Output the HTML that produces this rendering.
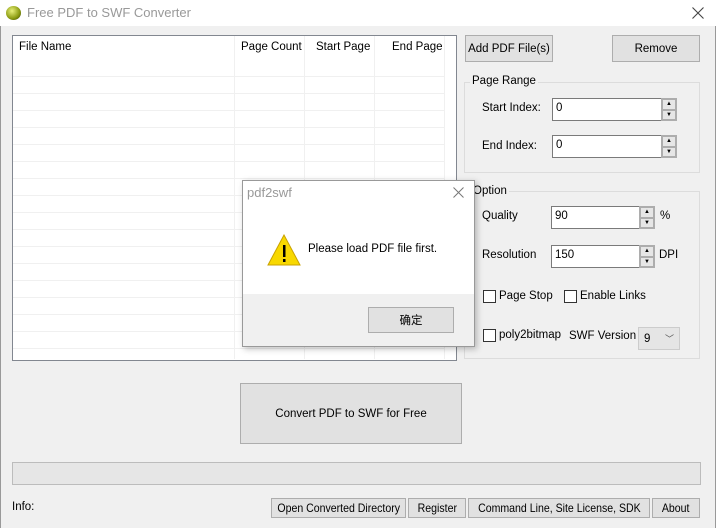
<!DOCTYPE html><html><head><style>
*{box-sizing:border-box;margin:0;padding:0}
body{width:716px;height:528px;position:relative;background:#f0f0f0;font-family:"Liberation Sans","Noto Sans CJK SC",sans-serif;font-size:11.5px;color:#000;overflow:hidden}
.a{position:absolute;white-space:nowrap}
.btn{position:absolute;background:#e1e1e1;border:1px solid #adadad;display:flex;align-items:center;justify-content:center;white-space:nowrap}
.sm span{display:inline-block;transform:scaleX(.88);font-size:12px}
.inp{position:absolute;background:#fff;border:1px solid #7a7a7a;padding:3px 3px}
.spin{position:absolute;width:16px;border:1px solid #adadad;background:#f0f0f0}
.spin div{height:50%;border:1px solid #adadad;background:#e6e6e6;font-size:6px;text-align:center;line-height:8px}
.grp{position:absolute;border:1px solid #dcdcdc}
.cb{position:absolute;width:13px;height:13px;border:1px solid #333;background:#fff}
.hl{position:absolute;left:13px;width:431px;height:1px;background:#f0f0f0}
.vl{position:absolute;top:36px;width:1px;height:323px;background:#f0f0f0}
</style></head><body>
<div class="a" style="left:0;top:0;width:716px;height:26px;background:#fff"></div>
<div class="a" style="left:6px;top:6px;width:15px;height:14px;border-radius:50%;background:radial-gradient(circle at 40% 35%,#e8f07a,#8a9a10 60%,#2e3a05)"></div>
<div class="a" style="left:27px;top:5px;font-size:13px;color:#999">Free PDF to SWF Converter</div>
<svg class="a" style="left:692px;top:7px" width="12" height="12"><path d="M0.5 0.5L11.5 11.5M11.5 0.5L0.5 11.5" stroke="#444" stroke-width="1.1"/></svg>
<div class="a" style="left:0;top:26px;width:1px;height:502px;background:#999"></div>
<div class="a" style="left:715px;top:26px;width:1px;height:502px;background:#999"></div>
<div class="a" style="left:12px;top:35px;width:445px;height:326px;background:#fff;border:1px solid #828790"></div>
<div class="a" style="left:19px;top:41px">File Name</div>
<div class="a" style="left:241px;top:41px">Page Count</div>
<div class="a" style="left:316px;top:41px">Start Page</div>
<div class="a" style="left:392px;top:41px">End Page</div>
<div class="vl" style="left:234px"></div><div class="vl" style="left:304px"></div><div class="vl" style="left:374px"></div><div class="vl" style="left:444px"></div>
<div class="hl" style="top:76px"></div><div class="hl" style="top:93px"></div><div class="hl" style="top:110px"></div><div class="hl" style="top:127px"></div><div class="hl" style="top:144px"></div><div class="hl" style="top:161px"></div><div class="hl" style="top:178px"></div><div class="hl" style="top:195px"></div><div class="hl" style="top:212px"></div><div class="hl" style="top:229px"></div><div class="hl" style="top:246px"></div><div class="hl" style="top:263px"></div><div class="hl" style="top:280px"></div><div class="hl" style="top:297px"></div><div class="hl" style="top:314px"></div><div class="hl" style="top:331px"></div><div class="hl" style="top:348px"></div>
<div class="btn" style="left:465px;top:35px;width:88px;height:27px">Add PDF File(s)</div>
<div class="btn" style="left:612px;top:35px;width:88px;height:27px">Remove</div>
<div class="grp" style="left:464px;top:82px;width:236px;height:91px"></div>
<div class="a" style="left:470px;top:75px;background:#f0f0f0;padding:0 2px">Page Range</div>
<div class="a" style="left:482px;top:102px">Start Index:</div>
<div class="inp" style="left:552px;top:98px;width:110px;height:23px">0</div>
<div class="spin" style="left:661px;top:98px;height:23px"><div>▲</div><div>▼</div></div>
<div class="a" style="left:482px;top:140px">End Index:</div>
<div class="inp" style="left:552px;top:135px;width:110px;height:23px">0</div>
<div class="spin" style="left:661px;top:135px;height:23px"><div>▲</div><div>▼</div></div>
<div class="grp" style="left:464px;top:191px;width:236px;height:168px"></div>
<div class="a" style="left:471px;top:185px;background:#f0f0f0;padding:0 2px">Option</div>
<div class="a" style="left:482px;top:210px">Quality</div>
<div class="inp" style="left:551px;top:206px;width:89px;height:23px">90</div>
<div class="spin" style="left:639px;top:206px;height:23px"><div>▲</div><div>▼</div></div>
<div class="a" style="left:660px;top:210px">%</div>
<div class="a" style="left:482px;top:249px">Resolution</div>
<div class="inp" style="left:551px;top:245px;width:89px;height:23px">150</div>
<div class="spin" style="left:639px;top:245px;height:23px"><div>▲</div><div>▼</div></div>
<div class="a" style="left:659px;top:249px">DPI</div>
<div class="cb" style="left:483px;top:290px"></div><div class="a" style="left:499px;top:290px">Page Stop</div>
<div class="cb" style="left:564px;top:290px"></div><div class="a" style="left:580px;top:290px">Enable Links</div>
<div class="cb" style="left:483px;top:329px"></div><div class="a" style="left:499px;top:329px">poly2bitmap</div>
<div class="a" style="left:569px;top:330px">SWF Version</div>
<div class="btn" style="left:638px;top:327px;width:42px;height:23px;justify-content:space-between;padding:0 5px;background:#e5e5e5;border-color:#ccc"><span>9</span><span style="font-size:9px;color:#555">﹀</span></div>
<div class="btn" style="left:240px;top:383px;width:222px;height:61px">Convert PDF to SWF for Free</div>
<div class="a" style="left:12px;top:462px;width:689px;height:23px;background:#e6e6e6;border:1px solid #bcbcbc"></div>
<div class="a" style="left:12px;top:501px">Info:</div>
<div class="btn sm" style="left:271px;top:498px;width:135px;height:20px"><span>Open Converted Directory</span></div>
<div class="btn sm" style="left:408px;top:498px;width:58px;height:20px"><span>Register</span></div>
<div class="btn sm" style="left:468px;top:498px;width:182px;height:20px"><span>Command Line, Site License, SDK</span></div>
<div class="btn sm" style="left:652px;top:498px;width:48px;height:20px"><span>About</span></div>
<div class="a" style="left:242px;top:180px;width:233px;height:167px;background:#fff;border:1px solid #999;box-shadow:2px 2px 6px rgba(0,0,0,.25)"></div>
<div class="a" style="left:247px;top:185px;font-size:13px;color:#999">pdf2swf</div>
<svg class="a" style="left:453px;top:187px" width="11" height="11"><path d="M0.5 0.5L10.5 10.5M10.5 0.5L0.5 10.5" stroke="#777" stroke-width="1"/></svg>
<svg class="a" style="left:267px;top:234px" width="34" height="32"><polygon points="17,1 33,31 1,31" fill="#f8d800" stroke="#c9a200"/><rect x="16" y="11" width="2.5" height="12" fill="#000"/><rect x="16" y="25" width="2.5" height="3" fill="#000"/></svg>
<div class="a" style="left:308px;top:243px">Please load PDF file first.</div>
<div class="a" style="left:243px;top:294px;width:231px;height:52px;background:#f0f0f0"></div>
<div class="btn" style="left:368px;top:307px;width:86px;height:26px">确定</div>
</body></html>
